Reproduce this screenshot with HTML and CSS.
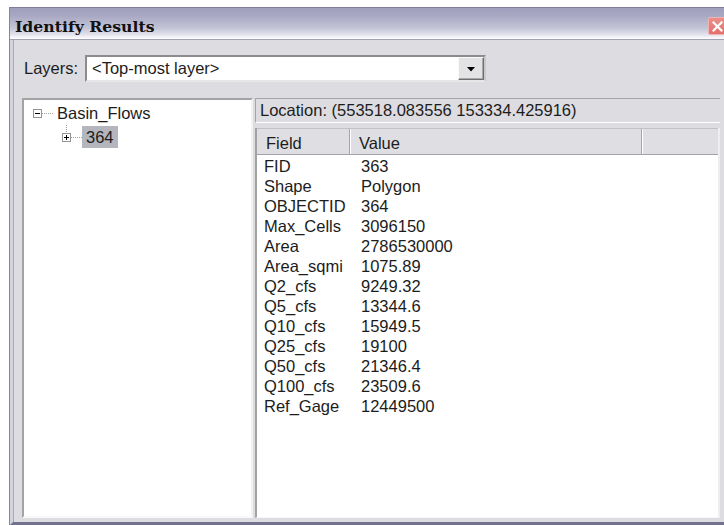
FILE: index.html
```html
<!DOCTYPE html>
<html lang="en">
<head>
<meta charset="utf-8">
<title>Identify Results</title>
<link rel="stylesheet" href="styles.css">
</head>
<body>
<div class="window">
  <div class="titlebar">
    <span class="title">Identify Results</span>
    <span class="close" aria-label="Close">
      <svg width="11" height="11" viewBox="0 0 11 11"><path d="M1.5 1.5 L9.5 9.5 M9.5 1.5 L1.5 9.5" stroke="#fff" stroke-width="2.2" stroke-linecap="square"/></svg>
    </span>
  </div>
  <div class="body">
    <div class="layers-row">
      <span class="layers-label">Layers:</span>
      <div class="combo">
        <span class="combo-text">&lt;Top-most layer&gt;</span>
        <span class="combo-btn">
          <svg width="8" height="5" viewBox="0 0 8 5"><path d="M0 0 H8 L4 4.5 Z" fill="#000"/></svg>
        </span>
      </div>
    </div>
    <div class="main">
      <div class="tree">
        <div class="tree-item">
          <span class="expander">
            <svg width="9" height="9" viewBox="0 0 9 9"><path d="M2 4.5 H7" stroke="#000" stroke-width="1"/></svg>
          </span>
          <span class="branch"></span>
          <span class="node-label">Basin_Flows</span>
        </div>
        <div class="tree-item child">
          <span class="expander has-parent">
            <svg width="9" height="9" viewBox="0 0 9 9"><path d="M2 4.5 H7 M4.5 2 V7" stroke="#000" stroke-width="1"/></svg>
          </span>
          <span class="branch"></span>
          <span class="node-label selected">364</span>
        </div>
      </div>
      <div class="details">
        <div class="location">Location: (553518.083556 153334.425916)</div>
        <div class="list">
          <div class="list-head">
            <div class="head-cell">Field</div>
            <div class="head-cell">Value</div>
            <div class="head-cell last"></div>
          </div>
          <div class="rows">
            <div class="row"><span class="field">FID</span><span class="value">363</span></div>
            <div class="row"><span class="field">Shape</span><span class="value">Polygon</span></div>
            <div class="row"><span class="field">OBJECTID</span><span class="value">364</span></div>
            <div class="row"><span class="field">Max_Cells</span><span class="value">3096150</span></div>
            <div class="row"><span class="field">Area</span><span class="value">2786530000</span></div>
            <div class="row"><span class="field">Area_sqmi</span><span class="value">1075.89</span></div>
            <div class="row"><span class="field">Q2_cfs</span><span class="value">9249.32</span></div>
            <div class="row"><span class="field">Q5_cfs</span><span class="value">13344.6</span></div>
            <div class="row"><span class="field">Q10_cfs</span><span class="value">15949.5</span></div>
            <div class="row"><span class="field">Q25_cfs</span><span class="value">19100</span></div>
            <div class="row"><span class="field">Q50_cfs</span><span class="value">21346.4</span></div>
            <div class="row"><span class="field">Q100_cfs</span><span class="value">23509.6</span></div>
            <div class="row"><span class="field">Ref_Gage</span><span class="value">12449500</span></div>
          </div>
        </div>
      </div>
    </div>
  </div>
</div>
</body>
</html>
```
FILE: styles.css
```css
html, body {
  margin: 0;
  background: #fff;
  overflow: hidden;
}

body {
  font-family: "Liberation Sans", Arial, sans-serif;
  font-size: 16.5px;
  color: #1c1c1c;
}

/* dialog frame */
.window {
  box-sizing: border-box;
  margin: 7px 0 0 9px;
  width: 725px;
  height: 518px;
  border-left: 1px solid #8585a3;
  display: flex;
  flex-direction: column;
}

.titlebar {
  box-sizing: border-box;
  flex: none;
  height: 33px;
  display: flex;
  align-items: flex-start;
  padding-left: 5px;
  border-top: 1px solid #7e7e9c;
  border-bottom: 1px solid #a2a2b2;
  background: linear-gradient(#9f9fbd, #a8a8c3 25%, #c4c4d7 65%, #e6e6ef 88%, #ffffff 100%);
}

.title {
  padding-top: 10px;
  font-family: "DejaVu Serif", "Liberation Serif", serif;
  font-weight: bold;
  font-size: 15.7px;
  line-height: 18px;
  color: #111;
}

.close {
  box-sizing: border-box;
  margin: 9px 7px 0 auto;
  width: 19px;
  height: 18px;
  border: 1px solid #f1b3ad;
  border-radius: 2px;
  background: linear-gradient(#ec8f8b, #e2706d);
  display: flex;
  align-items: center;
  justify-content: center;
}

.body {
  box-sizing: border-box;
  flex: 1;
  display: flex;
  flex-direction: column;
  padding: 15px 0 4px 9px;
  background: #dcdce1;
  border-left: 3px solid #d3d3df;
  border-bottom: 3px solid #72728c;
  box-shadow: inset 1px 0 #a9a9ba;
}

/* layer chooser */
.layers-row {
  flex: none;
  height: 27px;
  display: flex;
  align-items: center;
  padding-left: 2px;
}

.layers-label {
  width: 61px;
}

.combo {
  box-sizing: border-box;
  width: 401px;
  height: 27px;
  display: flex;
  align-items: center;
  background: #fff;
  border: 2px solid;
  border-color: #8c8c8c #c9c9c9 #e6e6e6 #8c8c8c;
}

.combo-text {
  flex: 1;
  padding-left: 5px;
}

.combo-btn {
  box-sizing: border-box;
  width: 26px;
  height: 23px;
  display: flex;
  align-items: center;
  justify-content: center;
  padding-top: 2px;
  background: #e3e3e6;
  border: 1px solid;
  border-color: #fafafa #6f6f6f #6f6f6f #fafafa;
  box-shadow: inset -1px -1px #a8a8a8;
}

/* panes */
.main {
  flex: none;
  height: 420px;
  margin-top: 16px;
  display: flex;
  gap: 2px;
}

.tree {
  box-sizing: border-box;
  width: 231px;
  padding: 1px 0 0 9px;
  background: #fff;
  border: 2px solid;
  border-color: #a3a3a3 #f2f2f2 #f8f8f8 #a3a3a3;
}

.tree-item {
  height: 24px;
  display: flex;
  align-items: center;
}

.tree-item.child {
  padding-left: 29px;
}

.expander {
  box-sizing: border-box;
  width: 9px;
  height: 9px;
  border: 1px solid #949494;
  background: #fff;
  display: flex;
  align-items: center;
  justify-content: center;
}

.expander svg {
  flex: none;
  margin: -1px;
}

/* connector from the parent row down to the child button */
.expander.has-parent {
  position: relative;
}

.expander.has-parent::before {
  content: "";
  position: absolute;
  left: 3px;
  top: -9px;
  height: 7px;
  border-left: 1px dotted #a0a0a0;
}

.branch {
  width: 11px;
  border-top: 1px dotted #a0a0a0;
}

.node-label {
  padding: 0 4px;
  line-height: 22px;
}

.node-label.selected {
  background: #b5b5bd;
}

.details {
  width: 465px;
  display: flex;
  flex-direction: column;
}

.location {
  box-sizing: border-box;
  flex: none;
  height: 25px;
  padding-left: 4px;
  line-height: 23px;
  border-top: 1px solid #a6a6a6;
  border-left: 1px solid #a6a6a6;
  border-bottom: 1px solid #fff;
}

/* attribute list */
.list {
  flex: 1;
  margin-top: 5px;
  background: #fff;
  border-left: 2px solid #a3a3a3;
  border-right: 2px solid #eeeeee;
  border-bottom: 1px solid #f6f6f6;
}

.list-head {
  box-sizing: border-box;
  height: 27px;
  display: grid;
  grid-template-columns: 93px 292px 1fr;
  background: #dfdfe3;
  border-top: 1px solid #c2c2c6;
  border-bottom: 1px solid #a3a3a3;
}

.head-cell {
  padding: 4px 0 0 9px;
  line-height: 20px;
  border-right: 1px solid #a6a6a6;
  box-shadow: 1px 0 #fff;
}

.head-cell.last {
  border-right: none;
  box-shadow: none;
}

.rows {
  padding-top: 1px;
}

.row {
  display: grid;
  grid-template-columns: 93px 292px;
  height: 20px;
  line-height: 20px;
}

.field {
  padding-left: 7px;
}

.value {
  padding-left: 11px;
}
```
